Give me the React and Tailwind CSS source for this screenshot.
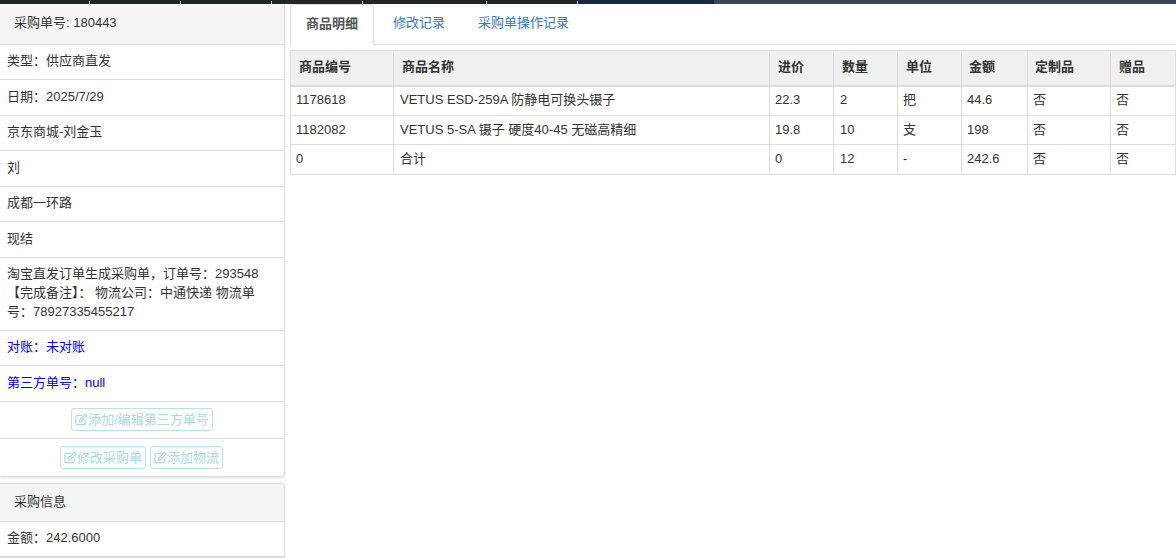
import React from 'react';

const rows = [
    ['1178618', 'VETUS ESD-259A 防静电可换头镊子', '22.3', '2', '把', '44.6', '否', '否'],
    ['1182082', 'VETUS 5-SA 镊子 硬度40-45 无磁高精细', '19.8', '10', '支', '198', '否', '否'],
    ['0', '合计', '0', '12', '-', '242.6', '否', '否'],
];

const headers = ['商品编号', '商品名称', '进价', '数量', '单位', '金额', '定制品', '赠品'];

const ticks = ['left-[89px]', 'left-[180px]', 'left-[271px]', 'left-[362px]', 'left-[486px]', 'left-[577px]'];

// pencil in a square, same shape as the font icon in the original buttons
const EditIcon = () => (
    <svg width="13" height="13" viewBox="0 0 14 13" fill="none" stroke="currentColor" strokeWidth="1.3" className="shrink-0">
        <path d="M11 7.5V10.5C11 11.4 10.4 12 9.5 12H2.5C1.6 12 1 11.4 1 10.5V3.5C1 2.6 1.6 2 2.5 2H8" />
        <path d="M5 7L11.2 0.8L13 2.6L6.8 8.8L4.8 9.2Z" />
    </svg>
);

const EditButton = ({ children }) => (
    <button className="inline-flex items-center h-[23px] px-[3px] border border-[#bce0e8] rounded-[3px] text-[#a9d8e4] text-[13px] bg-white">
        <EditIcon />
        {children}
    </button>
);

const Row = ({ className = 'h-[35.5px]', children }) => (
    <div className={`flex items-center px-[7px] pb-[2px] border-b border-[#ddd] ${className}`}>{children}</div>
);

const App = () => {
    return (
        <div className="w-[1176px] h-[558px] overflow-hidden bg-white text-[13px] text-[#333]" style={{ fontFamily: '"Liberation Sans", "Noto Sans CJK SC", sans-serif' }}>
            <div className="relative flex h-[4px]">
                <div className="w-[578px] bg-[#212529]"></div>
                <div className="w-[136px] bg-[#14284b]"></div>
                <div className="flex-1 bg-[#3a4656]"></div>
                {ticks.map(t => (
                    <span key={t} className={`absolute top-[1px] h-[3px] w-[1px] bg-[#c8ccd0] ${t}`}></span>
                ))}
            </div>
            <div className="flex">
                <div className="w-[285px] shrink-0">
                    <div className="border border-t-0 border-l-0 border-[#ddd] rounded-br-[4px] shadow-sm">
                        <div className="flex items-center h-[40.75px] pl-[14px] pb-[2px] bg-[#f5f5f5] border-b border-[#ddd] rounded-tr-[4px]">采购单号: 180443</div>
                        <Row>类型：供应商直发</Row>
                        <Row>日期：2025/7/29</Row>
                        <Row>京东商城-刘金玉</Row>
                        <Row>刘</Row>
                        <Row>成都一环路</Row>
                        <Row>现结</Row>
                        <Row className="h-[73px] leading-[19px]">
                            <div>淘宝直发订单生成采购单，订单号：293548 【完成备注】： 物流公司：中通快递 物流单号：78927335455217</div>
                        </Row>
                        <Row className="h-[35.5px] text-[#0000ee]">对账：未对账</Row>
                        <Row className="h-[35.5px] text-[#0000ee]">第三方单号：null</Row>
                        <div className="flex items-center justify-center h-[37px] border-b border-[#ddd]">
                            <EditButton>添加/编辑第三方单号</EditButton>
                        </div>
                        <div className="flex items-center justify-center gap-[4px] h-[37.5px] pr-[1px]">
                            <EditButton>修改采购单</EditButton>
                            <EditButton>添加物流</EditButton>
                        </div>
                    </div>
                    <div className="mt-[5.5px] border border-l-0 border-[#ddd] rounded-tr-[4px]">
                        <div className="flex items-center h-[38px] pl-[14px] pb-[2px] bg-[#f5f5f5] border-b border-[#ddd] rounded-tr-[4px]">采购信息</div>
                        <Row>金额：242.6000</Row>
                    </div>
                </div>
                <div className="flex-1 pl-[5px] min-w-0">
                    <div className="flex h-[41px] border-b border-[#ddd]">
                        <div className="flex items-center justify-center w-[84px] h-[41px] pb-[2px] bg-white border border-[#ddd] border-b-white rounded-t-[4px] text-[#555] font-bold">商品明细</div>
                        <div className="flex items-center ml-[19px] pb-[2px] text-[#337ab7]">修改记录</div>
                        <div className="flex items-center ml-[33px] pb-[2px] text-[#337ab7]">采购单操作记录</div>
                    </div>
                    <table className="mt-[5px] w-[885px] table-fixed border-collapse border border-[#ddd]">
                        <colgroup>
                            <col className="w-[103px]" />
                            <col className="w-[376px]" />
                            <col className="w-[64px]" />
                            <col className="w-[64px]" />
                            <col className="w-[64px]" />
                            <col className="w-[66px]" />
                            <col className="w-[83px]" />
                            <col className="w-[65px]" />
                        </colgroup>
                        <thead>
                            <tr className="h-[35px] bg-[#f0f0f0]">
                                {headers.map((h, i) => (
                                    <th key={h} className={`border border-[#ddd] border-b-2 pr-[8px] pb-[2px] text-left font-bold ${i === 5 || i === 6 ? 'pl-[7px]' : 'pl-[8px]'}`}>{h}</th>
                                ))}
                            </tr>
                        </thead>
                        <tbody>
                            {rows.map((row, r) => (
                                <tr key={row[0]} className={r === 1 ? 'h-[29px]' : 'h-[30px]'}>
                                    {row.map((cell, i) => (
                                        <td key={i} className={`border border-[#ddd] pr-[5px] ${r === 0 ? 'pb-[3px]' : 'pb-[1px]'} ${i === 1 || i === 3 ? 'pl-[6px]' : 'pl-[5px]'}`}>{cell}</td>
                                    ))}
                                </tr>
                            ))}
                        </tbody>
                    </table>
                </div>
            </div>
        </div>
    );
};

export default App;
